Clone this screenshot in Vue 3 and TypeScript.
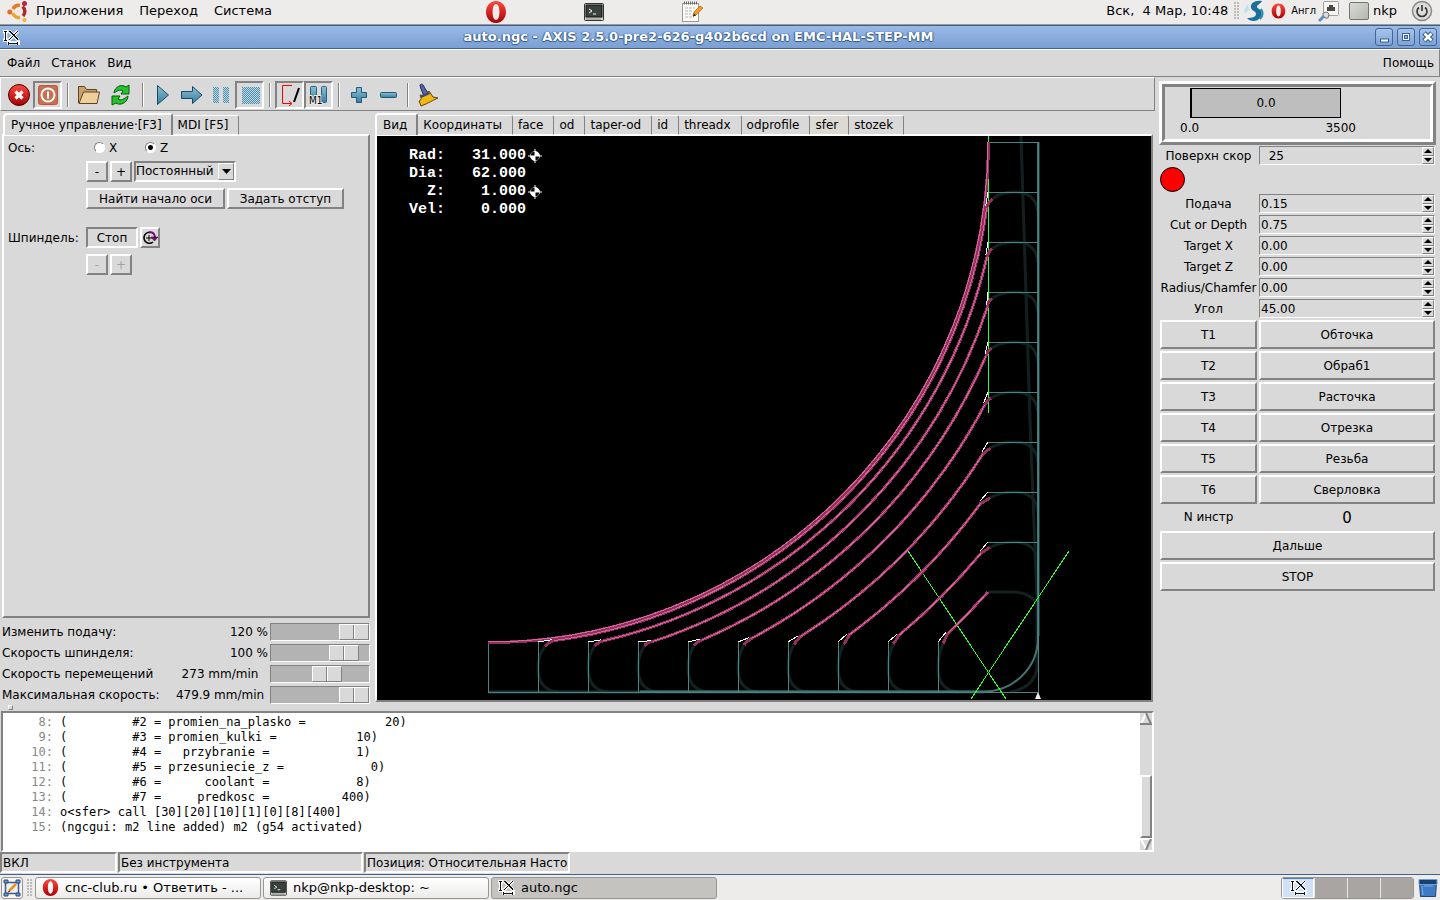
<script setup lang="ts">
import { ref } from 'vue'

interface Override { id: string; label: string; text: string; kind: string; value: number }
interface Param { id: string; label: string; value: string }

const axis = ref('Z')
const jogMode = ref('Постоянный')
const viewTabs = ['Вид', 'Координаты', 'face', 'od', 'taper-od', 'id', 'threadx', 'odprofile', 'sfer', 'stozek']

const overrides = ref<Override[]>([
  { id: 'feed', label: 'Изменить подачу:', text: '120 %', kind: 'percent', value: 100 },
  { id: 'spindle', label: 'Скорость шпинделя:', text: '100 %', kind: 'percent', value: 85 },
  { id: 'jog', label: 'Скорость перемещений', text: '273 mm/min', kind: 'speed', value: 61 },
  { id: 'max', label: 'Максимальная скорость:', text: '479.9 mm/min', kind: 'speed', value: 100 },
])

const surface = ref('  25')
const params = ref<Param[]>([
  { id: 'p-feed', label: 'Подача', value: '0.15' },
  { id: 'p-cut', label: 'Cut or Depth', value: '0.75' },
  { id: 'p-x', label: 'Target X', value: '0.00' },
  { id: 'p-z', label: 'Target Z', value: '0.00' },
  { id: 'p-r', label: 'Radius/Chamfer', value: '0.00' },
  { id: 'p-a', label: 'Угол', value: '45.00' },
])
const tools = [
  ['T1', 'Обточка'],
  ['T2', 'Обраб1'],
  ['T3', 'Расточка'],
  ['T4', 'Отрезка'],
  ['T5', 'Резьба'],
  ['T6', 'Сверловка'],
]

const readout = [
  { text: 'Rad:   31.000', homed: true },
  { text: 'Dia:   62.000', homed: false },
  { text: '  Z:    1.000', homed: true },
  { text: 'Vel:    0.000', homed: false },
]

const code = [
  { n: 8, text: '(         #2 = promien_na_plasko =           20)' },
  { n: 9, text: '(         #3 = promien_kulki =           10)' },
  { n: 10, text: '(         #4 =   przybranie =            1)' },
  { n: 11, text: '(         #5 = przesuniecie_z =            0)' },
  { n: 12, text: '(         #6 =      coolant =            8)' },
  { n: 13, text: '(         #7 =     predkosc =          400)' },
  { n: 14, text: 'o<sfer> call [30][20][10][1][0][8][400]' },
  { n: 15, text: '(ngcgui: m2 line added) m2 (g54 activated)' },
]

// Tool path: concentric passes round (CX, CY), symmetric about the diagonal.
const CX = 488
const CY = 142
const radii = [503, 512, 526, 542, 562, 585, 611, 642, 673]
const mirror = (x: number, y: number): [number, number] => [y + 346, x - 346]

const passes = radii.map((r, k) => {
  const i = k + 1
  const x0 = CX + 50 * i
  const sx = x0 + 17 - 0.8 * i
  const sy = CY + Math.sqrt(r * r - (sx - CX) ** 2)
  const tx = x0 + 7 - 0.2 * i
  const ty = 647 - 0.4 * i
  const [ex, ey] = mirror(sx, sy)
  const [ux, uy] = mirror(tx, ty)
  const y0 = x0 - 346
  const last = i === 9
  const cut = last
    ? `M${tx} ${ty} Q${tx + 2} ${ty - 5} ${sx} ${sy} A${r} ${r} 0 0 0 988 592`
    : `M${tx} ${ty} Q${tx + 3} ${ty - 4} ${sx} ${sy} A${r} ${r} 0 0 0 ${ex} ${ey} Q${ux - 4} ${uy + 3} ${ux} ${uy}`
  const core = last
    ? `M${sx} ${sy} A${r} ${r} 0 0 0 988 592`
    : `M${sx} ${sy} A${r} ${r} 0 0 0 ${ex} ${ey}`
  const lead = `M${x0} 642 L${sx - 2} ${sy - 1}` + (last ? '' : ` M988 ${y0} L${ex - 1} ${ey - 2}`)
  const lowShade = `M${tx} ${ty} Q${x0} 655 ${x0} 668 Q${x0} 690 ${x0 + 20} 692`
  const topShade = last
    ? 'M988 592 H1012 Q1032 592 1038 606'
    : `M${ux} ${uy} Q1001 ${y0} 1014 ${y0} Q1036 ${y0} 1038 ${y0 + 20}`
  return { i, x0, y0, cut, core, lead, shade: `${lowShade} ${topShade}` }
})
const gridLines = Array.from({ length: 10 }, (_, i) => {
  const v = `M${488 + 50 * i}.5 642 V692`
  return i < 9 ? `${v} M988 ${142 + 50 * i}.5 H1038` : v
}).join(' ')
</script>

<template>
  <div class="desktop">
    <svg width="0" height="0" class="defs" aria-hidden="true">
      <defs>
        <linearGradient id="gBlue" x1="0" y1="0" x2="0" y2="1">
          <stop offset="0" stop-color="#8fbfd2" /><stop offset="1" stop-color="#357f9f" />
        </linearGradient>
        <linearGradient id="gRed" x1="0" y1="0" x2="0" y2="1">
          <stop offset="0" stop-color="#ff4a3c" /><stop offset="1" stop-color="#a80008" />
        </linearGradient>
        <pattern id="pDots" width="2" height="2" patternUnits="userSpaceOnUse">
          <rect width="2" height="2" fill="#c3d6de" />
          <rect width="1" height="1" fill="#4a90b0" /><rect x="1" y="1" width="1" height="1" fill="#4a90b0" />
        </pattern>
        <symbol id="opera" viewBox="0 0 22 22">
          <path fill="url(#gRed)" fill-rule="evenodd" d="M11 0C17 0 21 5 21 11S17 22 11 22 1 17 1 11 5 0 11 0ZM11 3C9 3 7.600 6 7.600 11S9 19 11 19 14.400 16 14.400 11 13 3 11 3Z" />
        </symbol>
        <symbol id="term" viewBox="0 0 20 18">
          <rect x=".5" y=".5" width="19" height="17" rx="1" fill="#d5d7d0" stroke="#333" />
          <rect x="2" y="2" width="16" height="12" fill="#39423e" stroke="#111" />
          <path d="M5 6l3 2-3 2M9 11h3" fill="none" stroke="#fff" />
          <path d="M2 16h15" stroke="#8a8c86" />
        </symbol>
        <symbol id="axisicon" viewBox="0 0 16 14">
          <g fill="none" stroke="#fff" stroke-width="3"><path d="M0 1.500H5M2.500 1V9M0 9.500H5M6 1L14 9M14 1L6 9M5.500 9.500V14M14.500 9.500V14M5 12H15" /></g>
          <g fill="none" stroke="#111" stroke-width="1" shape-rendering="crispEdges"><path d="M1 1.500H4M2.500 1V9M1 9.500H4M6 1L14 9M14 1L6 9M5.500 11V14M13.500 11V14M5 12.500H14" /></g>
        </symbol>
      </defs>
    </svg>

    <header class="panel">
      <svg class="ubuntu" viewBox="0 0 22 22" width="22" height="22">
        <g fill="none" stroke-width="3.500">
          <path d="M6 9A6.500 6.500 0 0 1 13 5.500" stroke="#e8791f" />
          <path d="M15.500 6.500A6.500 6.500 0 0 1 16 16" stroke="#b02a2a" />
          <path d="M5.800 13A6.500 6.500 0 0 0 13 17.500" stroke="#eaa52c" />
        </g>
        <circle cx="17.500" cy="3.500" r="2.500" fill="#b02a38" /><circle cx="2.800" cy="12" r="2.500" fill="#e8692a" /><circle cx="17.500" cy="20" r="2" fill="#f0b429" />
      </svg>
      <nav class="gmenu"><a href="#">Приложения</a><a href="#">Переход</a><a href="#">Система</a></nav>
      <div class="launchers">
        <svg width="22" height="22"><use href="#opera" /></svg>
        <svg width="20" height="18"><use href="#term" /></svg>
        <svg viewBox="0 0 22 22" width="22" height="22">
          <rect x="1.500" y="2.500" width="16" height="18" fill="#fafaf7" stroke="#999" />
          <path d="M3 2h13" stroke="#666" stroke-width="3" stroke-dasharray="1 1" />
          <path d="M4 7h10M4 10h8M4 13h6M4 16h9" stroke="#b5b5b5" stroke-dasharray="3 1" />
          <path d="M12 15l1-4 6-6 3 2-7 7z" fill="#f79a1e" stroke="#9a5200" stroke-width=".6" /><path d="M12 15.500l1-3 2 2z" fill="#222" />
        </svg>
      </div>
      <div class="tray">
        <span class="clock">Вск,&nbsp; 4 Мар, 10:48</span>
        <span class="grip"></span>
        <svg viewBox="0 0 20 22" width="20" height="22" class="swirl">
          <path d="M18 1C11 0 6 3 7 8c1 3 5 3 5 6 0 3-4 4-9 4 3 4 10 4 13 0 3-4 2-8-1-9-2-1-3-3-1-4 2-2 3-2 4-4z" fill="#1b6f9b" />
          <path d="M5 4C1 6-1 10 1 14c1-3 3-3 5-3C4 9 4 6 5 4z" fill="#bfe0ee" /><path d="M17 9c2 3 2 7-1 10" fill="none" stroke="#2b8ab8" stroke-width="2" />
        </svg>
        <svg width="15" height="16"><use href="#opera" /></svg>
        <span class="lang">Англ</span>
        <svg viewBox="0 0 22 22" width="22" height="22">
          <rect x="5.500" y="1.500" width="15" height="14" rx="1" fill="#f4f4f1" stroke="#a0a09b" />
          <path d="M9 11V7h2V5h4v2h2v4z" fill="#4a4a45" /><path d="M1 21l6-6" stroke="#5f8fc8" stroke-width="3" /><path d="M5 13l4-1 2 2-1 4-3 0-2-3z" fill="#ddd" stroke="#777" />
        </svg>
        <span class="userbox"></span>
        <span class="user">nkp</span>
        <svg class="power" viewBox="0 0 22 22" width="22" height="22">
          <circle cx="11" cy="11" r="9.500" fill="#dcdcd8" stroke="#888" stroke-width="1.500" /><path d="M8 7.500A5 5 0 1 0 14 7.500M11 5v6" fill="none" stroke="#333" stroke-width="1.600" />
        </svg>
      </div>
    </header>

    <div class="titlebar">
      <svg width="17" height="15"><use href="#axisicon" /></svg>
      <h1>auto.ngc - AXIS 2.5.0-pre2-626-g402b6cd on EMC-HAL-STEP-MM</h1>
      <div class="winbtns">
        <button aria-label="Свернуть"><svg width="16" height="16"><path d="M4 11.500h9" stroke="#37609a" stroke-width="4" /><path d="M5 11.500h7" stroke="#fff" stroke-width="2" /></svg></button>
        <button aria-label="Развернуть"><svg width="16" height="16"><rect x="5.500" y="5.500" width="5" height="5" fill="none" stroke="#37609a" stroke-width="3" /><rect x="5.500" y="5.500" width="5" height="5" fill="none" stroke="#fff" /></svg></button>
        <button aria-label="Закрыть"><svg width="16" height="16"><path d="M4 4l8 8M12 4l-8 8" stroke="#37609a" stroke-width="5" /><path d="M4.500 4.500l7 7M11.500 4.500l-7 7" stroke="#fff" stroke-width="2.500" /></svg></button>
      </div>
    </div>

    <nav class="menubar"><a href="#">Файл</a><a href="#">Станок</a><a href="#">Вид</a><a href="#" class="help">Помощь</a></nav>

    <div class="body">
      <main class="main">
        <div class="toolbar">
          <button aria-label="Аварийный останов"><svg viewBox="0 0 24 24" width="24" height="24"><circle cx="12" cy="12" r="10.500" fill="url(#gRed)" stroke="#400" stroke-width="1" /><path d="M8.500 8.500l7 7M15.500 8.500l-7 7" stroke="#fff" stroke-width="3.200" /></svg></button>
          <button class="on" aria-label="Питание"><svg viewBox="0 0 22 22" width="22" height="22"><rect x="1.500" y="1.500" width="19" height="19" rx="2" fill="#c96f50" stroke="#b05a3c" /><circle cx="11" cy="11" r="6.500" fill="none" stroke="#fff" stroke-width="2" /><path d="M11 7.500v7" stroke="#fff" stroke-width="2" /></svg></button>
          <i class="sep"></i>
          <button class="wide" aria-label="Открыть"><svg viewBox="0 0 24 22" width="24" height="22"><path d="M1.500 19V2.500h6l2 3h10V9" fill="#c9a269" stroke="#5b4424" /><path d="M2 19.500L6.500 8h16L20 19.500z" fill="#efcf9b" stroke="#5b4424" /></svg></button>
          <button class="wide" aria-label="Перезагрузить"><svg viewBox="0 0 22 22" width="22" height="22"><g fill="#27c22d" stroke="#075c0b" stroke-width="1"><path d="M4 9C4 5 9 0 14 2l2 1 3-2v9h-8l2-3c-3-2-6 0-9 2z" /><path d="M18 12c0 5-5 9-10 8l-2-1-4 2v-9h8l-2 3c3 2 6 0 10-3z" /></g></svg></button>
          <i class="sep"></i>
          <button aria-label="Пуск"><svg viewBox="0 0 22 22" width="22" height="22"><path d="M5.500 1.500V20.500L16.500 11z" fill="url(#gBlue)" stroke="#164a66" /></svg></button>
          <button aria-label="Шаг"><svg viewBox="0 0 22 22" width="22" height="22"><path d="M.5 7.500h11v-5l9.500 8.500-9.500 8.500v-5H.5z" fill="url(#gBlue)" stroke="#164a66" /></svg></button>
          <button aria-label="Пауза"><svg class="crisp" viewBox="0 0 22 22" width="22" height="22"><rect x="3" y="3" width="6" height="16" fill="url(#pDots)" /><rect x="13" y="3" width="6" height="16" fill="url(#pDots)" /></svg></button>
          <button class="on" aria-label="Стоп"><svg class="crisp" viewBox="0 0 22 22" width="22" height="22"><rect x="3" y="3" width="18" height="17" fill="url(#pDots)" /></svg></button>
          <i class="sep"></i>
          <button class="on" aria-label="Пропуск блоков"><svg viewBox="0 0 22 22" width="22" height="22"><path d="M13 1.500H3.500V19.500H12M10 17l3 2.500-3 2.500" fill="none" stroke="#f00" /><path d="M20 4L15 18" stroke="#000" stroke-width="2" /></svg></button>
          <button class="on" aria-label="Пауза M1"><svg viewBox="0 0 22 22" width="22" height="22"><rect x="2.500" y="2.500" width="6" height="14" rx="1" fill="url(#gBlue)" stroke="#246582" /><rect x="13.500" y="2.500" width="5" height="16" rx="1" fill="url(#gBlue)" stroke="#246582" /><text x="1" y="20" class="m1">M1</text></svg></button>
          <i class="sep"></i>
          <button aria-label="Приблизить"><svg viewBox="0 0 22 22" width="22" height="22"><path d="M8.500 3.500h5v5h5v5h-5v5h-5v-5h-5v-5h5z" fill="url(#gBlue)" stroke="#1d5b7b" /></svg></button>
          <button aria-label="Отдалить"><svg viewBox="0 0 22 22" width="22" height="22"><rect x="3.500" y="8.500" width="16" height="5" rx="1" fill="url(#gBlue)" stroke="#1d5b7b" /></svg></button>
          <i class="sep"></i>
          <button aria-label="Очистить"><svg viewBox="0 0 22 24" width="22" height="24"><path d="M3 2c2-2 4 0 4 2l4 6-4 3-3-7z" fill="#5467a8" stroke="#1f2850" /><path d="M3 12c4 1 7-1 9-4l4 6 5 1c-5 2-9 5-17 8l-2-5c3-1 2-4 1-6z" fill="#f3b812" stroke="#5c4300" /><path d="M3 13l9-4 1 2-9 4z" fill="#394880" /></svg></button>
        </div>

        <div class="work">
          <section class="left">
            <div class="tabs" role="tablist">
              <button role="tab" aria-selected="true" class="tab sel">Ручное управление·[F3]</button>
              <button role="tab" class="tab">MDI [F5]</button>
            </div>
            <div class="manual">
              <div class="mrow axisrow">
                <span class="mlabel">Ось:</span>
                <label class="radio"><input v-model="axis" type="radio" name="axis" value="X" />X</label>
                <label class="radio"><input v-model="axis" type="radio" name="axis" value="Z" />Z</label>
              </div>
              <div class="mrow">
                <span class="mlabel"></span>
                <button class="btn sq">-</button><button class="btn sq">+</button>
                <span class="combo">
                  <select v-model="jogMode" aria-label="Режим подачи"><option>Постоянный</option></select>
                  <i class="drop"><svg width="9" height="5"><path d="M0 0h9L4.500 5z" /></svg></i>
                </span>
              </div>
              <div class="mrow">
                <span class="mlabel"></span>
                <button class="btn home">Найти начало оси</button><button class="btn offset">Задать отступ</button>
              </div>
              <div class="mrow spindle">
                <span class="mlabel">Шпиндель:</span>
                <button class="btn stop">Стоп</button>
                <button class="btn spin-cw" aria-label="Шпиндель по часовой"><svg viewBox="0 0 16 16" width="16" height="16"><path d="M9 2.500A5.500 5.500 0 1 0 11 12" fill="none" stroke="#000" stroke-width="1.500" /><path d="M7 5v6M4 8h6" stroke="#000" /><path d="M7 2.500c3-1 6 1 6 5" fill="none" stroke="#7a0a7a" stroke-width="2" /><path d="M9 7h7l-3.500 4z" fill="#7a0a7a" stroke="#000" stroke-width=".5" /></svg></button>
              </div>
              <div class="mrow">
                <span class="mlabel"></span>
                <button class="btn sq" disabled>-</button><button class="btn sq" disabled>+</button>
              </div>
            </div>
            <div class="overrides">
              <div v-for="o in overrides" :key="o.id" class="orow">
                <label :for="o.id">{{ o.label }}</label>
                <output :class="o.kind">{{ o.text }}</output>
                <input :id="o.id" v-model.number="o.value" type="range" min="0" max="100" />
              </div>
            </div>
          </section>

          <section class="view">
            <div class="tabs" role="tablist">
              <button v-for="(t, i) in viewTabs" :key="t" role="tab" :class="['tab', { sel: i === 0, hover: t === 'sfer' }]">{{ t }}</button>
            </div>
            <div class="canvas">
              <svg class="plot" viewBox="377 136 774 563" preserveAspectRatio="xMidYMin meet">
                <g fill="none">
                  <path d="M1021 136L1030 420L1037 600V668Q1034 688 1010 692" stroke="#122120" stroke-width="3" />
                  <path v-for="p in passes" :key="'s' + p.i" :d="p.shade" stroke="#132120" stroke-width="3" />
                  <path d="M1038.500 142V636M985 692H488" stroke="#1c3635" stroke-width="3" />
                  <path d="M1038 142V636A54 54 0 0 1 984 691.500H640" stroke="#447676" stroke-width="2" />
                  <path :d="gridLines" class="crisp" stroke="#4a8585" />
                  <path d="M1038.500 142V692M488 692.500H1039" class="crisp" stroke="#4a8585" />
                  <path d="M988.500 136V413M908 551L1006 699M1069 551L971 699" class="crisp" stroke="#33ff33" />
                  <path d="M488 642.500A500 500 0 0 0 988.500 142" stroke="#93305f" stroke-width="3" class="crisp" />
                  <path v-for="p in passes" :key="'c' + p.i" :d="p.cut" stroke="#93305f" stroke-width="3" class="crisp" />
                  <path v-for="p in passes" :key="'w' + p.i" :d="p.lead" class="crisp" stroke="#fff" />
                  <path v-for="p in passes" :key="'k' + p.i" :d="p.core" stroke="#d8669c" class="crisp" />
                  <path d="M488 642A500 500 0 0 0 988 142" stroke="#d8669c" class="crisp" />
                </g>
                <path d="M1038 692l3 7h-6z" fill="#eee" />
              </svg>
              <div class="dro">
                <div v-for="r in readout" :key="r.text" class="droline">
                  <span>{{ r.text }}</span>
                  <svg v-if="r.homed" width="14" height="14" viewBox="0 0 14 14"><circle cx="7" cy="7" r="4.500" fill="#fff" stroke="#fff" /><path d="M7 7V2.500A4.500 4.500 0 0 0 2.500 7zM7 7V11.500A4.500 4.500 0 0 0 11.500 7z" fill="#000" /><path d="M7 0v14M0 7h14" stroke="#fff" /></svg>
                </div>
              </div>
            </div>
          </section>
        </div>

        <div class="sash"><i></i></div>

        <div class="code">
          <div class="lines">
            <div v-for="l in code" :key="l.n" class="line"><span class="no">{{ l.n }}:</span><span>{{ l.text }}</span></div>
          </div>
          <div class="scroll">
            <svg width="12" height="12"><path d="M6 0l6 11H0z" fill="#d9d9d9" /><path d="M6 0L1 11" stroke="#fff" stroke-width="2" /><path d="M6 0l5 11H0" fill="none" stroke="#828282" stroke-width="2" /></svg>
            <span class="track"><i></i></span>
            <svg width="12" height="12"><path d="M0 1h12L6 12z" fill="#d9d9d9" /><path d="M12 1H1l5 10" fill="none" stroke="#fff" stroke-width="2" /><path d="M11 1L6 12" stroke="#828282" stroke-width="2" /></svg>
          </div>
        </div>

        <div class="status">
          <span class="s1">ВКЛ</span><span class="s2">Без инструмента</span><span class="s3">Позиция: Относительная Настоя</span>
        </div>
      </main>

      <aside class="side">
        <div class="gauge"><div class="ginner">
          <div class="gbar">0.0</div>
          <div class="gscale"><span>0.0</span><span>3500</span></div>
        </div></div>
        <div class="form">
          <label for="surface">Поверхн скор</label>
          <div class="spin"><input id="surface" v-model="surface" type="text" /><span class="arrows"><button aria-label="Больше"><svg width="8" height="4"><path d="M0 4h8L4 0z" /></svg></button><button aria-label="Меньше"><svg width="8" height="4"><path d="M0 0h8L4 4z" /></svg></button></span></div>
          <div class="led"><i></i></div>
          <template v-for="p in params" :key="p.id">
            <label :for="p.id">{{ p.label }}</label>
            <div class="spin"><input :id="p.id" v-model="p.value" type="text" /><span class="arrows"><button aria-label="Больше"><svg width="8" height="4"><path d="M0 4h8L4 0z" /></svg></button><button aria-label="Меньше"><svg width="8" height="4"><path d="M0 0h8L4 4z" /></svg></button></span></div>
          </template>
        </div>
        <div class="form tools">
          <template v-for="t in tools" :key="t[0]"><button class="btn">{{ t[0] }}</button><button class="btn">{{ t[1] }}</button></template>
          <span class="ntool">N инстр</span><output class="nval">0</output>
          <button class="btn full">Дальше</button>
          <button class="btn full">STOP</button>
        </div>
      </aside>
    </div>

    <footer class="taskbar">
      <button class="showdesk" aria-label="Показать рабочий стол"><svg viewBox="0 0 18 18" width="18" height="18"><rect x="2.500" y="3.500" width="13" height="11" fill="#eee" stroke="#3a5d8f" stroke-width="1.500" /><path d="M1 1h4v3H1zM13 1h4v3h-4zM1 14h4v3H1zM13 14h4v3h-4z" fill="#6d95c7" stroke="#2d4d7d" /><path d="M6 12l7-7" stroke="#e8931c" stroke-width="2.500" /><path d="M5 13l2-1" stroke="#333" /></svg></button>
      <span class="grip"></span>
      <button class="task"><svg width="17" height="17"><use href="#opera" /></svg><span>cnc-club.ru • Ответить - ...</span></button>
      <button class="task"><svg width="17" height="16"><use href="#term" /></svg><span>nkp@nkp-desktop: ~</span></button>
      <button class="task active"><svg width="17" height="15"><use href="#axisicon" /></svg><span>auto.ngc</span></button>
      <div class="pager"><button class="cur" aria-label="Рабочее место 1"><svg width="17" height="15"><use href="#axisicon" /></svg></button><button aria-label="Рабочее место 2"></button><button aria-label="Рабочее место 3"></button><button aria-label="Рабочее место 4"></button></div>
      <svg class="trash" viewBox="0 0 20 20" width="20" height="20"><path d="M1.500 4.500L2.500 18.500h15l1-14z" fill="#3f7bc4" stroke="#1d4578" /><path d="M1 1.500h18v5H1z" fill="#17406f" stroke="#6b9fd8" /><path d="M4 8l1 9M6 8h9" stroke="#79abe0" /></svg>
    </footer>
  </div>
</template>

<style>
html, body { margin: 0; background: #d9d9d9; }
</style>

<style scoped>
.desktop { display: flex; flex-direction: column; min-height: 100vh; background: #d9d9d9; color: #000; font: 12px/16px "DejaVu Sans", "Noto Sans", sans-serif; }
.desktop *, .desktop { box-sizing: border-box; }
.defs { height: 0; }
button, input, select { font: inherit; color: inherit; margin: 0; padding: 0; border: 0; background: none; border-radius: 0; }
a { color: inherit; text-decoration: none; }
svg { display: block; flex: none; }
.crisp { shape-rendering: crispEdges; }

.panel { position: relative; display: flex; align-items: center; height: 25px; padding: 0 7px 2px; background: #edeceb; border-bottom: 1px solid #9c9a94; font-size: 13px; }
.gmenu { display: flex; gap: 16px; margin-left: 7px; }
.launchers { position: absolute; left: 485px; top: 1px; display: flex; align-items: center; gap: 77px; }
.tray { display: flex; align-items: center; margin-left: auto; }
.grip { width: 5px; height: 18px; background: radial-gradient(circle at 1px 1px, #bbb 1px, transparent 1px) 0 0 / 3px 3px; }
.clock { margin-right: 6px; }
.swirl { margin: 0 7px 0 5px; }
.lang { font-family: "DejaVu Sans Condensed", "DejaVu Sans"; font-size: 11px; margin: 0 2px 0 5px; }
.userbox { width: 20px; height: 18px; margin: 0 4px 0 9px; border: 1px solid #73766f; border-radius: 2px; background: linear-gradient(135deg, #d8dad5, #b5b8b1); }
.power { margin-left: 14px; }

.titlebar { position: relative; display: flex; align-items: center; height: 24px; padding: 0 63px 0 3px; background: linear-gradient(#99bae6, #7a9fd3); border-top: 1px solid #3f5f88; border-bottom: 1px solid #43618c; }
.titlebar h1 { flex: 1; margin: 0; text-align: center; color: #fff; font-size: 13px; line-height: 20px; font-weight: bold; text-shadow: 0 1px 1px #2f5384, 1px 0 1px #3f669b, -1px 0 1px #3f669b; }
.winbtns { position: absolute; right: 3px; top: 2px; display: flex; gap: 4px; }
.winbtns button { display: grid; place-items: center; width: 18px; height: 18px; border: 1px solid #426594; border-radius: 3px; background: linear-gradient(#a8c4ea, #7fa3d6); }

.menubar { display: flex; align-items: center; gap: 11px; height: 28px; padding: 0 5px 0 7px; border-top: 1px solid #fff; border-bottom: 1px solid #828282; border-right: 1px solid #828282; }
.help { margin-left: auto; }

.body { flex: 1; display: flex; min-height: 0; }
.main { flex: 1; min-width: 0; display: flex; flex-direction: column; }
.toolbar { display: flex; align-items: center; height: 34px; padding: 2px 0 0 3px; border: 1px solid #828282; border-top: 1px solid #fff; border-left-color: #fff; }
.toolbar button { display: grid; place-items: center; width: 29px; height: 28px; }
.toolbar .wide { width: 32px; }
.toolbar .on { border: 2px solid; border-color: #828282 #fff #fff #828282; }
.sep { width: 2px; height: 24px; margin: 0 4px 0 5px; border-left: 1px solid #828282; border-right: 1px solid #fff; }
.m1 { font: 10px "DejaVu Sans Condensed", "DejaVu Sans"; paint-order: stroke; stroke: #e8e8e8; stroke-width: 2px; }

.work { flex: 1; display: flex; min-height: 0; padding-top: 2px; }
.left { width: 371px; display: flex; flex-direction: column; }
.tabs { position: relative; z-index: 1; display: flex; align-items: flex-end; height: 22px; margin-bottom: -1px; }
.tab { height: 20px; padding: 0 10px 0 5px; border-top: 1px solid #fff; border-right: 1px solid #828282; border-bottom: 1px solid #fff; border-radius: 0 3px 0 0; white-space: nowrap; }
.tab.sel { height: 22px; padding: 0 9px 0 6px; border-top: 2px solid #fff; border-left: 2px solid #fff; border-right: 2px solid #828282; border-bottom: 0; border-radius: 4px 2px 0 0; background: #d9d9d9; }
.tab.hover { background: #dcdad2; }
.left .tabs { padding-left: 3px; }
.manual { flex: 1; margin: 0 1px 0 2px; padding: 3px 4px; border: 2px solid; border-color: #fff #828282 #828282 #fff; }
.mrow { display: flex; align-items: center; gap: 2px; margin-bottom: 6px; }
.mlabel { width: 76px; }
.mrow.axisrow { height: 17px; margin-bottom: 5px; }
.radio { display: flex; align-items: center; gap: 4px; width: 49px; margin-left: 1px; }
.radio + .radio { margin-left: 0; }
.radio input { appearance: none; width: 11px; height: 11px; margin-left: 7px; border: 1px solid; border-color: #828282 #fff #fff #828282; border-radius: 50%; background: #fff; }
.radio input:checked { background: radial-gradient(circle, #000 2px, #fff 3px); }
.btn { border: 2px solid; border-color: #fff #828282 #828282 #fff; text-align: center; }
.mrow .btn { height: 21px; line-height: 16px; }
.sq { width: 22px; }
.btn:disabled { color: #a3a3a3; }
.combo { position: relative; width: 102px; height: 21px; border: 2px solid; border-color: #828282 #fff #fff #828282; }
.combo select { appearance: none; width: 100%; height: 17px; padding-left: 0; line-height: 17px; }
.drop { position: absolute; right: 0; top: 0; display: grid; place-items: center; width: 16px; height: 17px; background: #d9d9d9; border: 1px solid; border-color: #fff #828282 #828282 #fff; pointer-events: none; }
.home { width: 139px; }
.offset { width: 117px; }
.spindle { margin-top: 18px; }
.mrow .stop { width: 52px; border-color: #828282 #fff #fff #828282; }
.spin-cw { width: 20px; display: grid; place-items: center; }

.overrides { margin-bottom: -3px; padding: 3px 1px 0 2px; }
.orow { display: flex; align-items: center; height: 21px; }
.orow output { margin-left: auto; margin-right: 2px; white-space: nowrap; }
.orow output.speed { width: 96px; text-align: center; }
.orow input { appearance: none; width: 100px; height: 18px; background: #b3b3b3; border: 1px solid; border-color: #828282 #fff #fff #828282; }
.orow input::-webkit-slider-thumb { appearance: none; width: 30px; height: 16px; border: 1px solid; border-color: #fff #828282 #828282 #fff; background: linear-gradient(90deg, #d9d9d9 13px, #828282 13px 14px, #fff 14px 15px, #d9d9d9 15px); }

.view { flex: 1; min-width: 0; display: flex; flex-direction: column; padding: 0 2px 0 4px; }
.canvas { position: relative; flex: 1; min-height: 0; background: #000; border: 2px solid; border-color: #fff #828282 #828282 #fff; }
.plot { position: absolute; inset: 0; width: 100%; height: 100%; }
.dro { position: absolute; left: 32px; top: 11px; color: #fff; font: bold 15px/18px "Liberation Mono", monospace; white-space: pre; }
.droline { display: flex; align-items: center; gap: 2px; }

.sash { height: 9px; padding: 3px 0 0 8px; }
.sash i { display: block; width: 5px; height: 5px; border: 1px solid; border-color: #fff #828282 #828282 #fff; }

.code { display: flex; height: 141px; margin: 0 1px; border: 2px solid; border-color: #828282 #fff #fff #828282; background: #fff; font: 12px/15px "DejaVu Sans Mono", monospace; white-space: pre; }
.lines { flex: 1; min-width: 0; padding-top: 2px; overflow: hidden; }
.line { display: flex; }
.no { width: 50px; margin-right: 7px; text-align: right; color: #888; }
.scroll { display: flex; flex-direction: column; width: 12px; background: #d9d9d9; }
.track { flex: 1; display: flex; flex-direction: column; justify-content: flex-end; }
.track i { height: 63px; border: 2px solid; border-color: #fff #828282 #828282 #fff; }

.status { display: flex; gap: 1px; height: 22px; }
.status span { height: 21px; padding-left: 1px; border: 2px solid; border-color: #828282 #fff #fff #828282; overflow: hidden; white-space: nowrap; line-height: 18px; }
.s1 { width: 117px; }
.s2 { width: 245px; }
.s3 { width: 206px; }

.side { width: 285px; padding: 4px 4px 0 4px; }
.gauge { border: 3px solid; border-color: #fff #828282 #828282 #fff; }
.ginner { height: 58px; padding: 1px 0 0 25px; border: 3px solid; border-color: #828282 #fff #fff #828282; }
.gbar { width: 151px; height: 30px; border: 1px solid #000; border-left-width: 2px; background: #bebebe; text-align: center; line-height: 28px; }
.gscale { display: flex; justify-content: space-between; width: 176px; margin-left: -10px; line-height: 20px; }
.form { display: grid; grid-template-columns: 97px 1fr; gap: 2px; align-items: center; margin: 1px 1px 0; }
.form label { text-align: center; white-space: nowrap; }
.spin { display: flex; height: 19px; border: 1px solid; border-color: #828282 #fff #fff #828282; }
.spin input { flex: 1; min-width: 0; padding-left: 1px; white-space: pre; }
.arrows { display: flex; flex-direction: column; width: 12px; }
.arrows button { flex: 1; display: grid; place-items: center; border: 1px solid; border-color: #fff #828282 #828282 #fff; }
.led { grid-column: 1 / 3; height: 25px; }
.led i { display: block; width: 25px; height: 25px; border: 1px solid #000; border-radius: 50%; background: #f00; }
.tools { margin-top: 2px; }
.tools .btn { height: 29px; }
.ntool { text-align: center; height: 23px; line-height: 23px; }
.nval { text-align: center; font-size: 15px; }
.full { grid-column: 1 / 3; }

.taskbar { display: flex; align-items: center; gap: 2px; height: 26px; padding: 0 2px 0 1px; background: #edeceb; border-top: 1px solid #43618c; font-size: 13px; }
.showdesk { display: grid; place-items: center; width: 22px; height: 22px; border: 1px solid #979590; border-radius: 3px; background: #f5f5f4; }
.taskbar .grip { margin: 0 1px 0 2px; }
.task { display: flex; align-items: center; gap: 6px; width: 226px; height: 22px; padding-left: 6px; border: 1px solid #979590; border-radius: 3px; background: linear-gradient(#fff, #ecebea); }
.task span { overflow: hidden; white-space: nowrap; }
.task.active { background: #c5c3c0; }
.pager { display: flex; gap: 1px; height: 22px; margin-left: auto; border: 1px solid #979590; border-radius: 3px; background: #e8e8e6; overflow: hidden; }
.pager button { display: grid; place-items: center; width: 32px; background: #a9a5a2; }
.pager .cur { background: #d0e1f7; border: 1px solid #fff; border-top-color: #4a7ab0; }
.trash { margin-left: 2px; }
</style>
